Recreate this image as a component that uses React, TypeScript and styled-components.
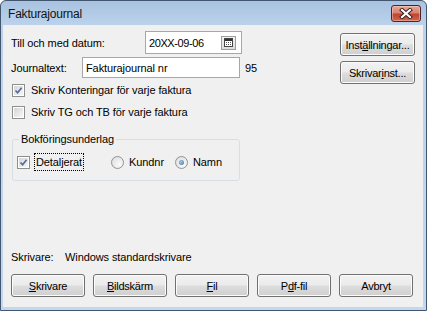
import React from 'react';
import styled, { createGlobalStyle } from 'styled-components';

const GlobalStyle = createGlobalStyle`
	html, body {
		margin: 0;
		padding: 0;
		background: #ffffff;
	}
	body {
		font-family: 'Liberation Sans', Arial, sans-serif;
		font-size: 11px;
		letter-spacing: -0.1px;
		color: #000;
	}
`;

const Window = styled.div`
	width: 427px;
	height: 311px;
	box-sizing: border-box;
	display: flex;
	flex-direction: column;
	background: linear-gradient(#a8c2e0, #bcd2eb 24px, #c3d8ee);
	border: 1px solid #42566f;
	border-radius: 6px 6px 0 0;
	overflow: hidden;
`;

const TitleBar = styled.div`
	height: 24px;
	flex: none;
	display: flex;
	align-items: center;
	padding: 0 5px 0 7px;
`;

const Title = styled.span`
	flex: 1;
	font-size: 12px;
	letter-spacing: -0.2px;
	color: #111;
	padding-top: 2px;
`;

const CloseButton = styled.div`
	width: 30px;
	height: 17px;
	box-sizing: border-box;
	display: flex;
	align-items: center;
	justify-content: center;
	border: 1px solid #4d2424;
	border-radius: 3px;
	background: linear-gradient(#e6a798, #d88372 45%, #c2442f 55%, #cd6650);
	box-shadow: inset 0 0 0 1px rgba(255, 220, 210, 0.45);
	margin-top: 1px;
`;

const Client = styled.div`
	flex: 1;
	margin: 0 3px 3px 2px;
	background: #f0f0f0;
	display: flex;
	flex-direction: column;
	padding: 6px 8px 10px 8px;
	box-sizing: border-box;
`;

const TopSection = styled.div`
	display: flex;
	justify-content: space-between;
`;

const LeftPane = styled.div`
	display: flex;
	flex-direction: column;
`;

const RightPane = styled.div`
	display: flex;
	flex-direction: column;
	gap: 5px;
	margin-top: 2px;
`;

const FieldRow = styled.div<{ $gap?: number }>`
	display: flex;
	align-items: center;
	margin-top: ${({ $gap }) => $gap ?? 0}px;
`;

const Label = styled.span<{ $width: number }>`
	width: ${({ $width }) => $width}px;
	flex: none;
	white-space: nowrap;
`;

const DateBox = styled.div`
	width: 97px;
	height: 23px;
	box-sizing: border-box;
	border: 1px solid #a7a7a7;
	background: #fff;
	display: flex;
	align-items: center;
	padding: 0 5px 0 3px;
	justify-content: space-between;
`;

const DateText = styled.span`
	letter-spacing: -0.4px;
`;

const CalendarButton = styled.div`
	width: 15px;
	height: 14px;
	box-sizing: border-box;
	border: 1px solid #9e9e9e;
	background: linear-gradient(#f4f4f4, #dcdcdc);
	display: flex;
	align-items: center;
	justify-content: center;
`;

const TextInput = styled.div`
	width: 158px;
	height: 21px;
	box-sizing: border-box;
	border: 1px solid #a7a7a7;
	background: #fff;
	display: flex;
	align-items: center;
	padding-left: 3px;
`;

const Counter = styled.span`
	margin-left: 5px;
`;

const CheckRow = styled.div<{ $top: number }>`
	display: flex;
	align-items: center;
	height: 18px;
	margin-top: ${({ $top }) => $top}px;
	padding-left: 1px;
	gap: 6px;
`;

const Box = styled.div`
	width: 13px;
	height: 13px;
	flex: none;
	box-sizing: border-box;
	border: 1px solid #8f8f8f;
	background: #fff;
	padding: 1px;
	display: flex;
`;

const BoxFill = styled.div`
	flex: 1;
	background: linear-gradient(135deg, #d6d6d6, #f6f6f6);
	display: flex;
	align-items: center;
	justify-content: center;
`;

const Group = styled.fieldset`
	margin: 11px 0 0 1px;
	width: 228px;
	box-sizing: border-box;
	border: 1px solid #d5dfe5;
	border-radius: 3px;
	padding: 7px 4px 9px 4px;
	min-width: 0;
`;

const Legend = styled.legend`
	padding: 0 2px;
	margin-left: 2px;
	line-height: 14px;
	color: #000;
`;

const GroupRow = styled.div`
	display: flex;
	align-items: center;
	height: 18px;
`;

const FocusLabel = styled.span`
	margin-left: 5px;
	padding: 1px 1px;
	outline: 1px dotted #000;
	outline-offset: 0;
	line-height: 14px;
`;

const RadioOption = styled.div<{ $left: number }>`
	display: flex;
	align-items: center;
	gap: 5px;
	margin-left: ${({ $left }) => $left}px;
`;

const RadioCircle = styled.div`
	width: 13px;
	height: 13px;
	box-sizing: border-box;
	border-radius: 50%;
	border: 1px solid #939393;
	background: radial-gradient(circle at 65% 65%, #fbfbfb, #d9d9d9);
	display: flex;
	align-items: center;
	justify-content: center;
`;

const RadioDot = styled.div`
	width: 5px;
	height: 5px;
	border-radius: 50%;
	background: radial-gradient(circle at 40% 40%, #a9c6e8, #3d6ea5);
`;

const Spacer = styled.div`
	flex: 1;
`;

const PrinterRow = styled.div`
	display: flex;
	align-items: center;
	height: 14px;
`;

const ButtonRow = styled.div`
	display: flex;
	justify-content: space-between;
	margin-top: 10px;
	padding-right: 2px;
`;

const Button = styled.div<{ $width?: number }>`
	width: ${({ $width }) => $width ?? 74}px;
	height: 23px;
	box-sizing: border-box;
	border: 1px solid #707070;
	border-radius: 3px;
	background: linear-gradient(#f2f2f2, #ebebeb 48%, #dddddd 52%, #cfcfcf);
	box-shadow: inset 0 0 0 1px #fcfcfc;
	display: flex;
	align-items: center;
	justify-content: center;
	white-space: nowrap;
	letter-spacing: -0.25px;
`;

const Key = styled.span`
	text-decoration: underline;
	text-underline-offset: 1px;
`;

const CheckMark = () => (
	<svg width="9" height="9" viewBox="0 0 9 9">
		<path d="M1.5 4.5 L3.6 6.8 L7.6 1.8" fill="none" stroke="#4f6a96" strokeWidth="1.6" />
	</svg>
);

const Check = ({ checked }: { checked?: boolean }) => (
	<Box>
		<BoxFill>{checked && <CheckMark />}</BoxFill>
	</Box>
);

const Radio = ({ selected }: { selected?: boolean }) => <RadioCircle>{selected && <RadioDot />}</RadioCircle>;

const CalendarIcon = () => (
	<svg width="9" height="9" viewBox="0 0 9 9">
		<rect x="0.5" y="0.5" width="8" height="8" fill="#fff" stroke="#444" />
		<rect x="1" y="1" width="7" height="2" fill="#333" />
		<rect x="2" y="4" width="1" height="1" fill="#555" />
		<rect x="4" y="4" width="1" height="1" fill="#555" />
		<rect x="6" y="4" width="1" height="1" fill="#555" />
		<rect x="2" y="6" width="1" height="1" fill="#555" />
		<rect x="4" y="6" width="1" height="1" fill="#555" />
		<rect x="6" y="6" width="1" height="1" fill="#555" />
	</svg>
);

const CloseGlyph = () => (
	<svg width="14" height="11" viewBox="0 0 14 11">
		<path d="M3 2 L11 9 M11 2 L3 9" stroke="#3a1a1a" strokeWidth="4" strokeLinecap="square" />
		<path d="M3 2 L11 9 M11 2 L3 9" stroke="#ffffff" strokeWidth="2.2" strokeLinecap="square" />
	</svg>
);

export default function App() {
	return (
		<>
			<GlobalStyle />
			<Window>
				<TitleBar>
					<Title>Fakturajournal</Title>
					<CloseButton>
						<CloseGlyph />
					</CloseButton>
				</TitleBar>
				<Client>
					<TopSection>
						<LeftPane>
							<FieldRow>
								<Label $width={134}>Till och med datum:</Label>
								<DateBox>
									<DateText>20XX-09-06</DateText>
									<CalendarButton>
										<CalendarIcon />
									</CalendarButton>
								</DateBox>
							</FieldRow>
							<FieldRow $gap={3}>
								<Label $width={71}>Journaltext:</Label>
								<TextInput>Fakturajournal nr</TextInput>
								<Counter>95</Counter>
							</FieldRow>
							<CheckRow $top={3}>
								<Check checked />
								<span>Skriv Konteringar för varje faktura</span>
							</CheckRow>
							<CheckRow $top={4}>
								<Check />
								<span>Skriv TG och TB för varje faktura</span>
							</CheckRow>
							<Group>
								<Legend>Bokföringsunderlag</Legend>
								<GroupRow>
									<Check checked />
									<FocusLabel>Detaljerat</FocusLabel>
									<RadioOption $left={28}>
										<Radio />
										<span>Kundnr</span>
									</RadioOption>
									<RadioOption $left={11}>
										<Radio selected />
										<span>Namn</span>
									</RadioOption>
								</GroupRow>
							</Group>
						</LeftPane>
						<RightPane>
							<Button $width={75}>
								Inst<Key>ä</Key>llningar...
							</Button>
							<Button $width={75}>
								Skrivar<Key>i</Key>nst...
							</Button>
						</RightPane>
					</TopSection>
					<Spacer />
					<PrinterRow>
						<Label $width={54}>Skrivare:</Label>
						<span>Windows standardskrivare</span>
					</PrinterRow>
					<ButtonRow>
						<Button>
							<Key>S</Key>krivare
						</Button>
						<Button>
							<Key>B</Key>ildskärm
						</Button>
						<Button>
							<Key>F</Key>il
						</Button>
						<Button>
							P<Key>d</Key>f-fil
						</Button>
						<Button>Avbryt</Button>
					</ButtonRow>
				</Client>
			</Window>
		</>
	);
}
